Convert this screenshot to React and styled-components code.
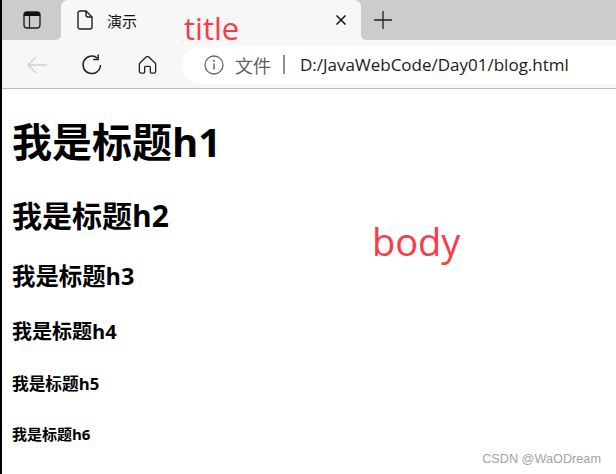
import React from "react";
import styled, { createGlobalStyle } from "styled-components";

const GlobalStyle = createGlobalStyle`
  html, body {
    margin: 0;
    padding: 0;
    background: #fff;
  }
  body {
    width: 616px;
    height: 474px;
    overflow: hidden;
    font-family: "Noto Sans CJK SC", "Noto Sans", sans-serif;
  }
`;

const Page = styled.div`
  position: relative;
  width: 616px;
  height: 474px;
  box-sizing: border-box;
  overflow: hidden;
  border-left: 2px solid #000;
  background: #fff;
`;

const Chrome = styled.header`
  border-bottom: 1px solid #bdbdbd;
  height: 88px;
  background: #f7f7f7;
`;

const TabStrip = styled.div`
  height: 40px;
  display: flex;
  background: linear-gradient(#cccccc 50%, #f7f7f7 50%);
`;

const TabGroup = styled.div`
  width: 59px;
  height: 40px;
  display: flex;
  align-items: center;
  padding-left: 21px;
  box-sizing: border-box;
  border-bottom-right-radius: 5px;
  background: #cccccc;
`;

const Tab = styled.div`
  width: 300px;
  height: 40px;
  box-sizing: border-box;
  display: flex;
  align-items: center;
  padding: 0 15px 0 16px;
  background: #f7f7f7;
  border-radius: 7px 7px 0 0;
`;

const TabTitle = styled.span`
  flex: 1;
  margin-left: 14px;
  font-size: 15px;
  color: #111;
`;

const StripRest = styled.div`
  flex: 1;
  height: 40px;
  display: flex;
  align-items: center;
  padding-left: 13px;
  border-bottom-left-radius: 5px;
  background: #cccccc;
`;

const Toolbar = styled.div`
  height: 48px;
  display: flex;
  align-items: center;
  box-sizing: border-box;
  padding-top: 1px;
`;

const ToolIcon = styled.div`
  width: ${({ $w }) => $w}px;
  display: flex;
  justify-content: center;
  align-items: center;
`;

const AddressBar = styled.div`
  flex: 1;
  height: 38px;
  display: flex;
  align-items: center;
  padding-left: 22px;
  background: #fff;
  border-radius: 19px 0 0 19px;
`;

const Secure = styled.span`
  margin-left: 11px;
  font-size: 18px;
  color: #5f5f5f;
`;

const Divider = styled.span`
  width: 2px;
  height: 19px;
  margin: 0 15px 0 12px;
  background: #8c8c8c;
`;

const Url = styled.span`
  font-family: "Open Sans", "Noto Sans", sans-serif;
  font-size: 17px;
  color: #1a1a1a;
`;

const Body = styled.main`
  padding: 0 10px;
  font-size: 20px;
  color: #000;
`;

const Heading = styled.div`
  font-family: "Open Sans", "Noto Sans CJK SC", sans-serif;
  font-weight: 700;
  font-size: ${({ $size }) => $size}px;
  line-height: ${({ $line }) => $line}px;
  margin-top: ${({ $top }) => $top}px;
  white-space: nowrap;
`;

const Note = styled.div`
  position: absolute;
  left: ${({ $x }) => $x}px;
  top: ${({ $y }) => $y}px;
  font-family: "Open Sans", "Noto Sans", sans-serif;
  font-size: ${({ $size }) => $size}px;
  line-height: 1;
  color: #fb3b45;
`;

const Watermark = styled.div`
  position: absolute;
  right: 15px;
  bottom: 8px;
  font-family: "Liberation Sans", sans-serif;
  font-size: 12.7px;
  color: #a3a3a3;
`;

const GroupIcon = () => (
  <svg width="18" height="18" viewBox="0 0 18 18" fill="none">
    <rect x="1" y="1" width="16" height="16" rx="3" stroke="#222" strokeWidth="1.4" />
    <path d="M1 3.500a2.500 2.500 0 0 1 2.500-2.500h11A2.500 2.500 0 0 1 17 3.500V5H1z" fill="#111" />
    <path d="M6.500 5v12" stroke="#222" strokeWidth="1.2" />
  </svg>
);

const PageIcon = () => (
  <svg width="16" height="20" viewBox="0 0 16 20" fill="none" stroke="#222" strokeWidth="1.4">
    <path d="M3 1h6l6 6v10a2 2 0 0 1-2 2H3a2 2 0 0 1-2-2V3a2 2 0 0 1 2-2z" />
    <path d="M9 1v4a2 2 0 0 0 2 2h4" />
  </svg>
);

const CloseIcon = () => (
  <svg width="10" height="10" viewBox="0 0 10 10" stroke="#111" strokeWidth="1.5">
    <path d="M.5.5l9 9M9.500.5l-9 9" />
  </svg>
);

const PlusIcon = () => (
  <svg width="18" height="18" viewBox="0 0 18 18" stroke="#222" strokeWidth="1.3">
    <path d="M9 0v18M0 9h18" />
  </svg>
);

const BackIcon = () => (
  <svg width="20" height="18" viewBox="0 0 20 18" fill="none" stroke="#d2d2d2" strokeWidth="1.4">
    <path d="M20 9H1M9 1L1 9l8 8" />
  </svg>
);

const ReloadIcon = () => (
  <svg width="22" height="22" viewBox="0 0 22 22" fill="none" stroke="#222" strokeWidth="1.5">
    <path d="M19.500 11A8.750 8.750 0 1 1 16.500 4.200" />
    <path d="M17.200 0.500v5h-5" />
  </svg>
);

const HomeIcon = () => (
  <svg width="19" height="18" viewBox="0 0 20 19" fill="none" stroke="#222" strokeWidth="1.4">
    <path d="M8.600 1.100a2 2 0 0 1 2.800 0l6.600 6.300a2 2 0 0 1 .6 1.400V16.400a1.600 1.600 0 0 1-1.600 1.600h-3a1 1 0 0 1-1-1v-5a1 1 0 0 0-1-1H8a1 1 0 0 0-1 1v5a1 1 0 0 1-1 1H3a1.600 1.600 0 0 1-1.600-1.600V8.800a2 2 0 0 1 .6-1.400z" />
  </svg>
);

const InfoIcon = () => (
  <svg width="20" height="20" viewBox="0 0 20 20" fill="none" stroke="#666">
    <circle cx="10" cy="10" r="9" strokeWidth="1.3" />
    <path d="M10 8.500v6" strokeWidth="1.500" />
    <circle cx="10" cy="5.800" r=".6" fill="#666" />
  </svg>
);

const headings = [
  { text: "我是标题h1", size: 40, line: 58, top: 24 },
  { text: "我是标题h2", size: 30, line: 44, top: 23 },
  { text: "我是标题h3", size: 23.4, line: 34, top: 21 },
  { text: "我是标题h4", size: 20, line: 29, top: 24 },
  { text: "我是标题h5", size: 16.7, line: 24, top: 26 },
  { text: "我是标题h6", size: 15, line: 20, top: 28 },
];

export default function App() {
  return (
    <Page>
      <GlobalStyle />
      <Chrome>
        <TabStrip>
          <TabGroup>
            <GroupIcon />
          </TabGroup>
          <Tab>
            <PageIcon />
            <TabTitle>演示</TabTitle>
            <CloseIcon />
          </Tab>
          <StripRest>
            <PlusIcon />
          </StripRest>
        </TabStrip>
        <Toolbar>
          <ToolIcon $w={70}>
            <BackIcon />
          </ToolIcon>
          <ToolIcon $w={40}>
            <ReloadIcon />
          </ToolIcon>
          <ToolIcon $w={70}>
            <HomeIcon />
          </ToolIcon>
          <AddressBar>
            <InfoIcon />
            <Secure>文件</Secure>
            <Divider />
            <Url>D:/JavaWebCode/Day01/blog.html</Url>
          </AddressBar>
        </Toolbar>
      </Chrome>
      <Body>
        {headings.map((h) => (
          <Heading key={h.text} $size={h.size} $line={h.line} $top={h.top}>
            {h.text}
          </Heading>
        ))}
      </Body>
      <Note $x={182} $y={13} $size={31}>title</Note>
      <Note $x={370} $y={222} $size={38}>body</Note>
      <Watermark>CSDN @WaODream</Watermark>
    </Page>
  );
}
